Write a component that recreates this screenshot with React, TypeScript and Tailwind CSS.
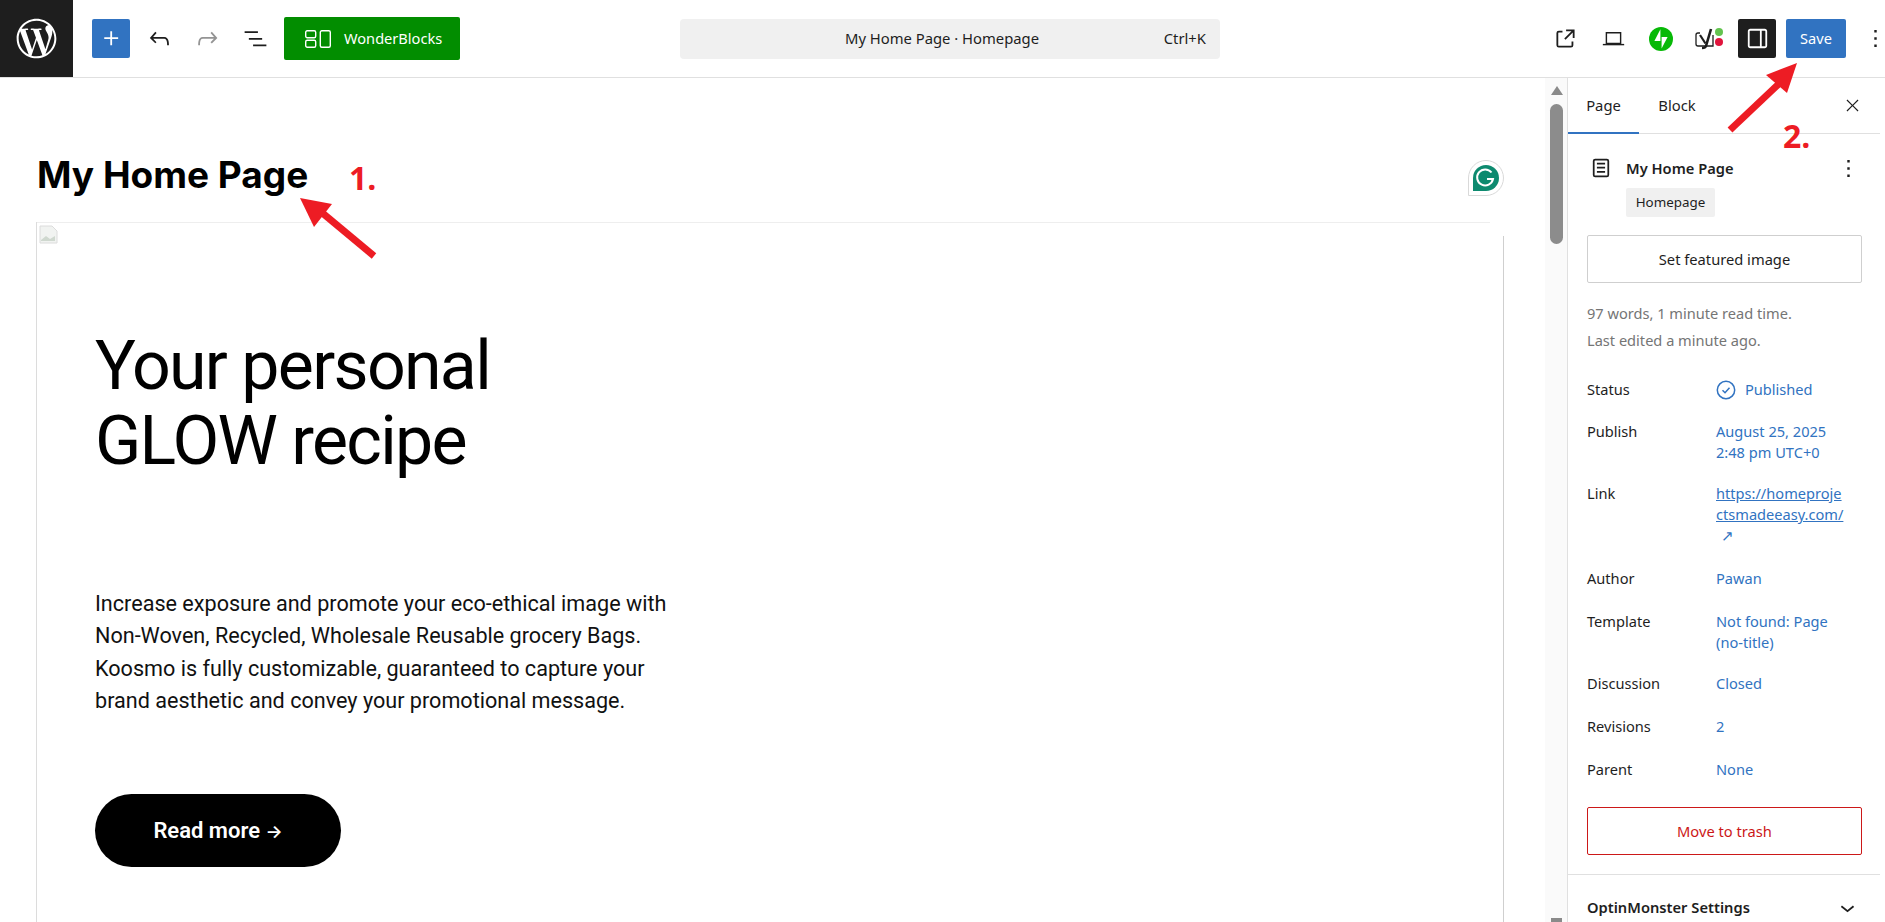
import type { ReactNode } from "react";
import { FaWordpressSimple } from "react-icons/fa";

const Wp = ({ d, className = "w-[29px] h-[29px]" }: { d: string; className?: string }) => (
  <svg viewBox="0 0 24 24" className={className} fill="currentColor">
    <path d={d} />
  </svg>
);

const icons = {
  plus: "M11 12.5V17.5H12.5V12.5H17.5V11H12.5V6H11V11H6V12.5H11Z",
  undo: "M18.3 11.7c-.6-.6-1.4-.9-2.3-.9H6.7l2.9-3.3-1.1-1-4.5 5L8.5 16l1-1-2.7-2.7H16c.5 0 .9.2 1.3.5 1 1 1 3.4 1 4.5v.3h1.5v-.2c0-1.5 0-4.3-1.5-5.7z",
  redo: "M15.6 6.5l-1.1 1 2.9 3.3H8c-.9 0-1.7.3-2.3.9-1.4 1.5-1.4 4.2-1.4 5.6v.2h1.5v-.3c0-1.1 0-3.5 1-4.5.3-.3.7-.5 1.3-.5h9.2L14.5 15l1.1 1.1 4.6-4.6-4.6-5z",
  list: "M3 6h11v1.5H3V6Zm3.5 5.5h11V13h-11v-1.5ZM21 17H10v1.5h11V17Z",
  external:
    "M19.5 4.5h-7V6h4.44l-5.97 5.97 1.06 1.06L18 7.06v4.44h1.5v-7Zm-13 1a2 2 0 0 0-2 2v10a2 2 0 0 0 2 2h10a2 2 0 0 0 2-2v-3H17v3a.5.5 0 0 1-.5.5h-10a.5.5 0 0 1-.5-.5v-10a.5.5 0 0 1 .5-.5h3V5.5h-3Z",
  sidebar:
    "M18 4H6c-1.1 0-2 .9-2 2v12c0 1.1.9 2 2 2h12c1.1 0 2-.9 2-2V6c0-1.1-.9-2-2-2zm-4 14.5H6c-.3 0-.5-.2-.5-.5V6c0-.3.2-.5.5-.5h8v13zm4.5-.5c0 .3-.2.5-.5.5h-2.5v-13H18c.3 0 .5.2.5.5v12z",
  close:
    "m13.06 12 6.47-6.47-1.06-1.06L12 10.94 5.53 4.47 4.47 5.53 10.94 12l-6.47 6.47 1.06 1.06L12 13.06l6.47 6.47 1.06-1.06L13.06 12Z",
  more: "M13 19h-2v-2h2v2zm0-6h-2v-2h2v2zm0-6h-2V5h2v2z",
  page: "M15.5 7.5h-7V9h7V7.5Zm-7 3.5h7v1.5h-7V11Zm7 3.5h-7V16h7v-1.5ZM17 4H7a2 2 0 0 0-2 2v12a2 2 0 0 0 2 2h10a2 2 0 0 0 2-2V6a2 2 0 0 0-2-2ZM7 5.5h10a.5.5 0 0 1 .5.5v12a.5.5 0 0 1-.5.5H7a.5.5 0 0 1-.5-.5V6a.5.5 0 0 1 .5-.5Z",
  chevron: "M17.5 11.6 12 16l-5.5-4.4.9-1.2L12 14l4.5-3.6 1 1.2z",
};

const Header = () => (
  <header className="h-[78px] shrink-0 flex items-center bg-white border-b border-[#e0e0e0] relative">
    <div className="w-[73px] h-[77px] bg-[#1e1e1e] flex items-center justify-center text-white">
      <FaWordpressSimple className="w-[41px] h-[41px]" />
    </div>
    <button className="ml-[19px] w-[38px] h-[39px] rounded-[2px] bg-[#3173c1] text-white flex items-center justify-center">
      <Wp d={icons.plus} />
    </button>
    <div className="ml-[10px] w-[38px] flex justify-center text-[#1e1e1e]">
      <Wp d={icons.undo} />
    </div>
    <div className="ml-[10px] w-[38px] flex justify-center text-[#949494]">
      <Wp d={icons.redo} />
    </div>
    <div className="ml-[10px] w-[38px] flex justify-center text-[#1e1e1e]">
      <Wp d={icons.list} />
    </div>
    <button className="ml-[10px] w-[176px] h-[43px] rounded-[2px] bg-[#028d00] text-white flex items-center pl-[21px] text-[14.6px]">
      <svg viewBox="0 0 26 18" className="w-[26px] h-[18px]" fill="none" stroke="currentColor" strokeWidth="1.4">
        <rect x="0.7" y="0.7" width="10" height="7" rx="1.5" />
        <rect x="0.7" y="10.3" width="10" height="7" rx="1.5" />
        <rect x="15.3" y="0.7" width="10" height="16.6" rx="1.5" />
      </svg>
      <span className="ml-[13px]">WonderBlocks</span>
    </button>
    <div className="ml-[220px] w-[540px] h-[40px] rounded-[4px] bg-[#f0f0f0] flex items-center text-[14.8px] text-[#1e1e1e] relative pr-[16px]">
      <span className="w-full text-center">My Home Page · Homepage</span>
      <span className="absolute right-[14px]">Ctrl+K</span>
    </div>
    <div className="ml-auto mr-[-5px] flex items-center">
      <Wp d={icons.external} className="w-[29px] h-[29px] text-[#1e1e1e]" />
      <svg viewBox="0 0 24 18" className="ml-[22px] w-[23px] h-[16px] text-[#1e1e1e]" fill="none" stroke="currentColor" strokeWidth="1.6">
        <path d="M4 2h16v12H4z" />
        <path d="M0 15.3h24" />
      </svg>
      <svg viewBox="0 0 24 24" className="ml-[24px] w-[24px] h-[24px]">
        <circle cx="12" cy="12" r="12" fill="#07b907" />
        <path d="M11.4 14H5.4l6-11.7zM12.6 21.6V10h6z" fill="#fff" />
      </svg>
      <div className="ml-[22px] w-[28px] h-[24px] flex items-center relative">
        <svg viewBox="0 0 21 24" className="w-[21px] h-[24px] text-[#1e1e1e]" fill="none" stroke="currentColor">
          <path d="M5 6H3a2 2 0 0 0-2 2v9a2 2 0 0 0 2 2h15V8" strokeWidth="1.3" />
          <path d="M5 8l5.5 8.5" strokeWidth="2.2" />
          <path d="M16 2l-5 17q-.6 2-4 2" strokeWidth="2.6" />
        </svg>
        <span className="absolute right-0 top-[1px] w-[8px] h-[8px] rounded-full bg-[#63c34f]" />
        <span className="absolute right-0 top-[11px] w-[8px] h-[8px] rounded-full bg-[#e0143c]" />
      </div>
      <button className="ml-[15px] w-[38px] h-[39px] rounded-[2px] bg-[#1e1e1e] text-white flex items-center justify-center">
        <Wp d={icons.sidebar} />
      </button>
      <button className="ml-[10px] w-[60px] h-[39px] rounded-[2px] bg-[#3173c1] text-white text-[14.6px]">Save</button>
      <div className="ml-[15px] text-[#1e1e1e]">
        <Wp d={icons.more} />
      </div>
    </div>
  </header>
);

const Editor = () => (
  <main className="flex-1 min-w-0 bg-white pl-[37px] pr-[41px] overflow-hidden font-['Roboto',sans-serif] relative">
    <div className="pt-[75px] h-[144px] relative">
      <h1 className="font-['Inter',sans-serif] font-bold text-[37px] leading-[44px] text-black">My Home Page</h1>
      <svg viewBox="0 0 36 36" className="absolute right-0 top-[82px] w-[36px] h-[36px]">
        <path d="M18 .5a17.5 17.5 0 0 1 0 35H.5V18A17.5 17.5 0 0 1 18 .5z" fill="#fff" stroke="#d9d9d9" />
        <path d="M18 5a13 13 0 0 1 0 26H5V18A13 13 0 0 1 18 5z" fill="#0d8a6f" />
        <path d="M23.5 12.5a8 8 0 1 0 1.5 6.5h-6" fill="none" stroke="#fff" strokeWidth="2" />
      </svg>
    </div>
    <div className="-ml-px border-l border-[#dcdcdc] relative h-[700px]">
      <div className="absolute left-0 top-0 w-[1453px] border-t border-[#eeeeee]" />
      <div className="absolute right-0 top-[14px] bottom-0 border-r border-[#cfcfcf]" />
      <svg viewBox="0 0 19 19" className="absolute left-[2px] top-[3px] w-[19px] h-[19px]">
        <path d="M1 1h12l5 5v12H1z" fill="#f1f3f1" stroke="#dcdcdc" />
        <path d="M2 15l5-4 4 3 5-3v5H2z" fill="#cfd8cf" />
      </svg>
      <div className="pl-[58px] pt-[107px]">
        <h2 className="text-[68px] leading-[75px] font-[450] text-black tracking-[-1.7px]">
          Your personal
          <br />
          GLOW recipe
        </h2>
        <p className="mt-[109px] text-[21.6px] leading-[32.4px] text-[#111]">
          Increase exposure and promote your eco-ethical image with
          <br />
          Non-Woven, Recycled, Wholesale Reusable grocery Bags.
          <br />
          Koosmo is fully customizable, guaranteed to capture your
          <br />
          brand aesthetic and convey your promotional message.
        </p>
        <button className="mt-[76px] w-[246px] h-[73px] rounded-full bg-black text-white text-[22px] font-semibold">
          Read more <span className="font-['Inter',sans-serif] font-semibold text-[18px]">→</span>
        </button>
      </div>
    </div>
  </main>
);

const Scrollbar = () => (
  <div className="w-[22px] shrink-0 bg-[#fafafa] relative">
    <div className="absolute left-[6px] top-[8px] w-0 h-0 border-l-[6px] border-r-[6px] border-b-[9px] border-l-transparent border-r-transparent border-b-[#8a8a8a]" />
    <div className="absolute left-[5px] top-[26px] w-[13px] h-[140px] rounded-full bg-[#8c8c8c]" />
    <div className="absolute left-[6px] bottom-[0px] w-[11px] h-[4px] bg-[#8a8a8a]" />
  </div>
);

const Row = ({ label, gap, children }: { label: string; gap: string; children: ReactNode }) => (
  <div className={`flex leading-[21px] ${gap}`}>
    <div className="w-[129px] text-[#1e1e1e] shrink-0">{label}</div>
    <div className="w-[130px] text-[#3173c1] whitespace-nowrap">{children}</div>
  </div>
);

const Sidebar = () => (
  <aside className="w-[318px] shrink-0 bg-white border-l border-[#e0e0e0] font-['Noto_Sans',sans-serif] text-[14.6px] pr-[5px] overflow-hidden">
    <div className="h-[56px] border-b border-[#e0e0e0] flex items-center relative text-[#1e1e1e] text-[14.8px]">
      <div className="w-[71px] h-[55px] flex items-center justify-center border-b-2 border-[#3173c1] mt-[1px]">Page</div>
      <div className="ml-[2px] w-[72px] text-center">Block</div>
      <Wp d={icons.close} className="absolute right-[18px] w-[19px] h-[19px]" />
    </div>
    <div className="pl-[19px] pr-[18px]">
      <div className="flex items-center mt-[21px] h-[26px] relative">
        <Wp d={icons.page} className="w-[28px] h-[28px] text-[#1e1e1e]" />
        <span className="ml-[11px] text-[14.7px] font-semibold text-[#1e1e1e]">My Home Page</span>
        <Wp d={icons.more} className="absolute right-[-1px] w-[29px] h-[29px] text-[#1e1e1e]" />
      </div>
      <div className="ml-[39px] mt-[7px] w-[89px] h-[29px] rounded-[2px] bg-[#f0f0f0] flex items-center justify-center text-[13.4px] text-[#1e1e1e]">
        Homepage
      </div>
      <button className="mt-[18px] w-[275px] h-[48px] rounded-[2px] border border-[#cfcfcf] text-[#1e1e1e] text-[14.7px]">
        Set featured image
      </button>
      <div className="mt-[17px] leading-[27px] text-[#757575]">
        <div>97 words, 1 minute read time.</div>
        <div>Last edited a minute ago.</div>
      </div>
      <div className="mt-[25px] flex flex-col">
        <Row label="Status" gap="mt-0">
          <span className="flex items-center">
            <svg viewBox="0 0 20 20" className="w-[20px] h-[20px] mr-[9px]" fill="none" stroke="currentColor" strokeWidth="1.5">
              <circle cx="10" cy="10" r="8.7" />
              <path d="M6.5 10.3l2.5 2.4 4.5-5" />
            </svg>
            Published
          </span>
        </Row>
        <Row label="Publish" gap="mt-[21px]">
          August 25, 2025
          <br />
          2:48 pm UTC+0
        </Row>
        <Row label="Link" gap="mt-[20px]">
          <span className="underline">
            https://homeproje
            <br />
            ctsmadeeasy.com/
          </span>
          <br />
          <span className="pl-[5px]">↗</span>
        </Row>
        <Row label="Author" gap="mt-[22px]">Pawan</Row>
        <Row label="Template" gap="mt-[22px]">
          Not found: Page
          <br />
          (no-title)
        </Row>
        <Row label="Discussion" gap="mt-[20px]">Closed</Row>
        <Row label="Revisions" gap="mt-[22px]">2</Row>
        <Row label="Parent" gap="mt-[22px]">None</Row>
      </div>
      <button className="mt-[27px] w-[275px] h-[48px] rounded-[2px] border border-[#cc1818] text-[#cc1818] text-[14.7px]">
        Move to trash
      </button>
    </div>
    <div className="mt-[19px] border-t border-[#e0e0e0] pl-[19px] pr-[18px] pt-[18px] flex items-center justify-between">
      <span className="text-[14.7px] font-semibold text-[#1e1e1e]">OptinMonster Settings</span>
      <Wp d={icons.chevron} className="w-[29px] h-[29px] text-[#1e1e1e]" />
    </div>
  </aside>
);

// the red call-outs drawn on top of the screenshot
const Annotations = () => (
  <>
    <svg className="absolute left-0 top-0 w-full h-full pointer-events-none" viewBox="0 0 1885 922">
      <path d="M374 256 L320 211" stroke="#ed1c24" strokeWidth="7" />
      <path d="M300 198 L332 204 L314 227 Z" fill="#ed1c24" />
      <path d="M1730 130 L1785 78" stroke="#ed1c24" strokeWidth="7" />
      <path d="M1797 63 L1787 93 L1766 75 Z" fill="#ed1c24" />
    </svg>
    <span className="absolute left-[349px] top-[156px] text-[#ed1c24] font-['Open_Sans',sans-serif] font-bold text-[32px] leading-[44px]">1.</span>
    <span className="absolute left-[1783px] top-[114px] text-[#ed1c24] font-['Open_Sans',sans-serif] font-bold text-[32px] leading-[44px]">2.</span>
  </>
);

export default function App() {
  return (
    <div className="relative w-full h-[922px] overflow-hidden flex flex-col bg-white font-['Noto_Sans',sans-serif]">
      <Header />
      <div className="flex flex-1 min-h-0">
        <Editor />
        <Scrollbar />
        <Sidebar />
      </div>
      <Annotations />
    </div>
  );
}
